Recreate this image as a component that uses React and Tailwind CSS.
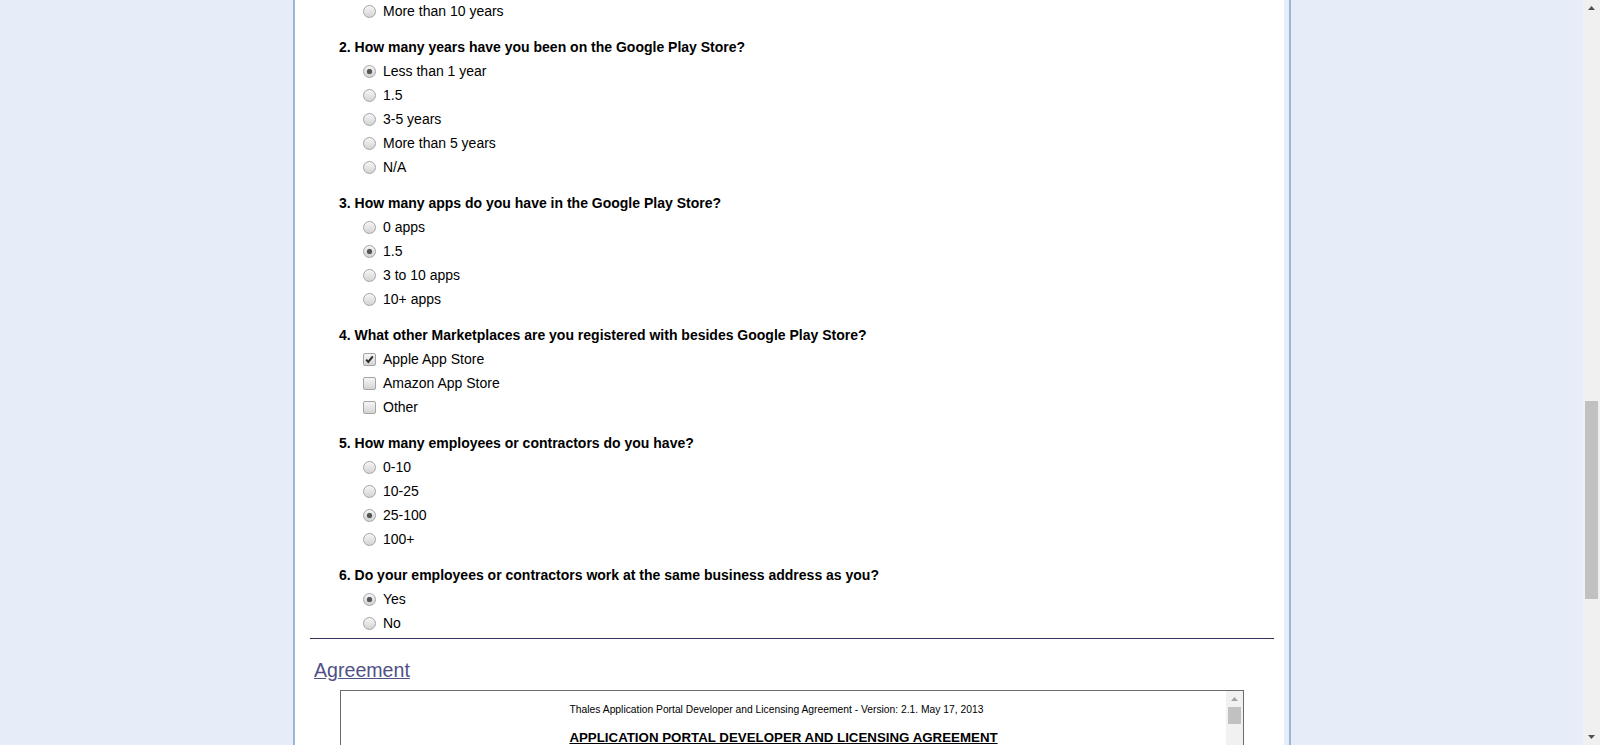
import React from 'react'

const blocks = [
  { q: null, type: 'radio', options: [['More than 10 years', false]] },
  {
    q: '2. How many years have you been on the Google Play Store?',
    type: 'radio',
    options: [
      ['Less than 1 year', true],
      ['1.5', false],
      ['3-5 years', false],
      ['More than 5 years', false],
      ['N/A', false],
    ],
  },
  {
    q: '3. How many apps do you have in the Google Play Store?',
    type: 'radio',
    options: [
      ['0 apps', false],
      ['1.5', true],
      ['3 to 10 apps', false],
      ['10+ apps', false],
    ],
  },
  {
    q: '4. What other Marketplaces are you registered with besides Google Play Store?',
    type: 'check',
    options: [
      ['Apple App Store', true],
      ['Amazon App Store', false],
      ['Other', false],
    ],
  },
  {
    q: '5. How many employees or contractors do you have?',
    type: 'radio',
    options: [
      ['0-10', false],
      ['10-25', false],
      ['25-100', true],
      ['100+', false],
    ],
  },
  {
    q: '6. Do your employees or contractors work at the same business address as you?',
    type: 'radio',
    options: [
      ['Yes', true],
      ['No', false],
    ],
  },
]

function Radio({ checked }) {
  return (
    <span className="flex h-[13px] w-[13px] shrink-0 items-center justify-center rounded-full border border-[#a4a4a4] bg-linear-to-b from-[#f6f6f6] to-[#d4d4d4]">
      {checked && <span className="h-[5px] w-[5px] rounded-full bg-[#555] shadow-[0_0_1px_#777]" />}
    </span>
  )
}

function Check({ checked }) {
  return (
    <span className="flex h-[13px] w-[13px] shrink-0 items-center justify-center rounded-[2px] border border-[#a4a4a4] bg-linear-to-b from-[#f6f6f6] to-[#d4d4d4]">
      {checked && (
        <svg width="11" height="11" viewBox="0 0 11 11">
          <path d="M2.2 5.6 L4.3 7.9 L8.8 2.4" fill="none" stroke="#2a2a2a" strokeWidth="2" />
        </svg>
      )}
    </span>
  )
}

function Arrow({ up, color }) {
  return (
    <svg width="7" height="4" viewBox="0 0 7 4">
      <path d={up ? 'M0 4 L3.5 0 L7 4 Z' : 'M0 0 L3.5 4 L7 0 Z'} fill={color} />
    </svg>
  )
}

export default function App() {
  return (
    <div className="flex h-[745px] w-full overflow-hidden bg-[#e6edf8] font-['Liberation_Sans',Arial,sans-serif] text-[14px] text-black">
      <div className="flex flex-1 pl-[293px]">
        <div className="flex w-[998px] border-x-2 border-[#9ab5d6]">
          <div className="flex-1 bg-white pl-[15px] pr-[10px]">
            {/* Cuestionario */}
            <div className="-mt-[1px] pl-[29px]">
              {blocks.map((b, i) => (
                <div key={i} className={b.q ? 'mt-[13px]' : ''}>
                  {b.q && <div className="flex h-[23px] items-center font-bold">{b.q}</div>}
                  {b.options.map(([label, checked]) => (
                    <div key={label} className="flex h-6 items-center pl-[24px]">
                      {b.type === 'radio' ? <Radio checked={checked} /> : <Check checked={checked} />}
                      <span className="ml-[7px]">{label}</span>
                    </div>
                  ))}
                </div>
              ))}
            </div>

            <div className="mt-[3px] h-px bg-[#34345f]" />

            <div className="mt-[20px] flex h-6 items-center pl-[4px]">
              <span className="text-[19.6px] text-[#505086] underline">Agreement</span>
            </div>

            {/* Caja del acuerdo */}
            <div className="mx-[30px] mt-[7px] flex h-[400px] border border-[#6b6b6b]">
              <div className="flex-1 text-center">
                <p className="pr-[14px] pt-[12px] text-[10.3px] leading-[13px]">
                  Thales Application Portal Developer and Licensing Agreement - Version: 2.1. May 17, 2013
                </p>
                <p className="mt-[13px] text-[13.3px] font-bold leading-[17px] underline">
                  APPLICATION PORTAL DEVELOPER AND LICENSING AGREEMENT
                </p>
              </div>
              <div className="flex w-[17px] flex-col bg-[#f1f1f1]">
                <div className="flex h-[16px] items-center justify-center">
                  <Arrow up color="#a3a3a3" />
                </div>
                <div className="mx-[2px] h-[17px] bg-[#c1c1c1]" />
              </div>
            </div>
          </div>
          <div className="w-[5px]" />
        </div>
      </div>

      {/* Barra de desplazamiento */}
      <div className="flex w-[17px] flex-col bg-[#f0f0f0]">
        <div className="flex h-[15px] items-center justify-center">
          <Arrow up color="#505050" />
        </div>
        <div className="mx-[2px] mt-[386px] h-[198px] bg-[#c1c1c1]" />
        <div className="flex-1" />
        <div className="flex h-[17px] items-center justify-center">
          <Arrow color="#505050" />
        </div>
      </div>
    </div>
  )
}
